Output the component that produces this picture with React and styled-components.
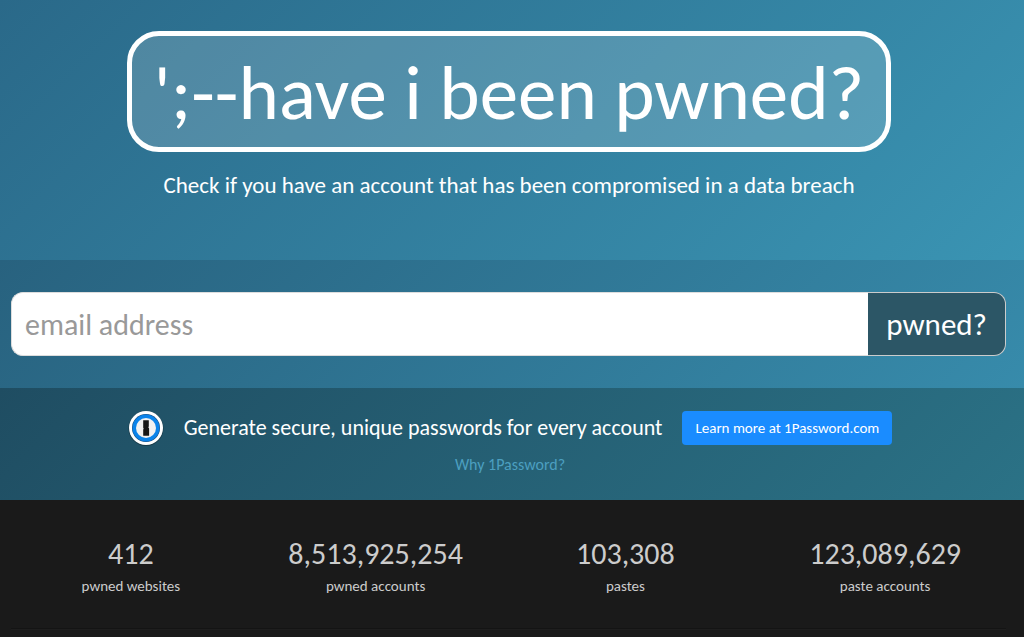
import React from "react";
import styled, { createGlobalStyle } from "styled-components";


const stats = [
  { value: "412", label: "pwned websites" },
  { value: "8,513,925,254", label: "pwned accounts" },
  { value: "103,308", label: "pastes" },
  { value: "123,089,629", label: "paste accounts" },
]

function OnePasswordLogo() {
  return (
    <svg width="36" height="36" viewBox="0 0 36 36" aria-hidden="true">
      <circle cx="18" cy="18.5" r="17.5" fill="#000" opacity="0.3" />
      <circle cx="18" cy="18" r="17" fill="#fff" />
      <circle cx="18" cy="18" r="14" fill="#1c4f80" />
      <circle cx="18" cy="18" r="13.5" fill="#0a83ea" />
      <circle cx="18" cy="18" r="10" fill="#f1f1f1" />
      <path d="M15.2 10.200h5.600v6.200l-.5.800.8 1.200v7.400h-5.900v-6.200l.5-.9-.5-1z" fill="#161616" />
    </svg>
  )
}

function App() {

  const [email, setEmail] = React.useState("")

  return (
    <Page>
      <GlobalStyle/>
      <Header>
        <Title>';--have i been pwned?</Title>
        <Lead>Check if you have an account that has been compromised in a data breach</Lead>
      </Header>
      <Search onSubmit={(e)=>{
          e.preventDefault();
        }}>
        <EmailInput
          type="text"
          aria-label="email address"
          placeholder="email address"
          value={email}
          onChange={(e)=>{
            setEmail(e.target.value)
          }}/>
        <SearchButton type="submit">pwned?</SearchButton>
      </Search>
      <Promo>
        <PromoRow>
          <OnePasswordLogo/>
          <PromoText>Generate secure, unique passwords for every account</PromoText>
          <PromoButton href="#1password">Learn more at 1Password.com</PromoButton>
        </PromoRow>
        <WhyLink href="#why">Why 1Password?</WhyLink>
      </Promo>
      <Stats>
        {stats.map((s)=>(
          <Stat key={s.label}>
            <Value>{s.value}</Value>
            <Label>{s.label}</Label>
          </Stat>
        ))}
      </Stats>
      <Hr/>
    </Page>
  );
}


const GlobalStyle = createGlobalStyle`
  *{
    box-sizing:border-box;
  }
  body{
    margin:0;
    background-color:#1a1a1a;
    color:#fff;
    font-family:Calibri, Carlito, Lato, sans-serif;
    font-size:15px;
    line-height:20px;
  }
`

const Page = styled.main`
  min-height:100vh;
  padding-bottom:4px;
`

const Header = styled.header`
  display:flex;
  flex-direction:column;
  align-items:center;
  padding:31px 24px 60px 18px;
  background:linear-gradient(135deg, #2a6989, #3a94b3);
`

const Title = styled.h1`
  margin:0;
  padding:12px 22px 8px;
  border:5px solid #fff;
  border-radius:32px;
  background-color:rgba(255,255,255,0.17);
  font-size:77px;
  font-weight:400;
  line-height:91px;
  text-align:center;
`

const Lead = styled.p`
  margin:18px 0 0;
  font-size:23px;
  line-height:30px;
  text-align:center;
`

const Search = styled.form`
  display:flex;
  padding:32px 18px 32px 11px;
  background:linear-gradient(135deg, #28627f, #378bab);
`

const EmailInput = styled.input`
  flex:1;
  min-width:0;
  height:64px;
  padding:0 13px;
  border:1px solid #ddd;
  border-right:0;
  border-radius:12px 0 0 12px;
  background-color:#fff;
  color:#555;
  font:inherit;
  font-size:30px;
  &::placeholder{
    color:#999;
    opacity:1;
  }
`

const SearchButton = styled.button`
  height:64px;
  padding:0 18px;
  border:1px solid #ccc;
  border-left:0;
  border-radius:0 12px 12px 0;
  background-color:#2c5666;
  color:#fff;
  font:inherit;
  font-size:31px;
  cursor:pointer;
`

const Promo = styled.section`
  display:flex;
  flex-direction:column;
  align-items:center;
  gap:9px;
  padding:22px 22px 25px 18px;
  background:linear-gradient(135deg, #1f4d62, #2b7286);
`

const PromoRow = styled.div`
  display:flex;
  align-items:center;
  gap:20px;
`

const PromoText = styled.span`
  font-size:22px;
  line-height:28px;
`

const PromoButton = styled.a`
  padding:7px 13px;
  border-radius:4px;
  background-color:#1a8cff;
  color:#fff;
  text-decoration:none;
`

const WhyLink = styled.a`
  color:#4c9fc0;
  font-size:16px;
  text-decoration:none;
`

const Stats = styled.section`
  display:grid;
  grid-template-columns:24fr 25fr 25fr 27fr;
  padding:34px 4px 32px 11px;
`

const Stat = styled.div`
  display:flex;
  flex-direction:column;
  align-items:center;
  gap:2px;
  color:#ccc;
`

const Value = styled.span`
  font-size:30px;
  line-height:40px;
`

const Label = styled.span`
  font-size:15px;
`

const Hr = styled.hr`
  margin:0 18px 0 11px;
  border:0;
  border-top:1px solid #141414;
  border-bottom:1px solid #1e1e1e;
`

export default App;
